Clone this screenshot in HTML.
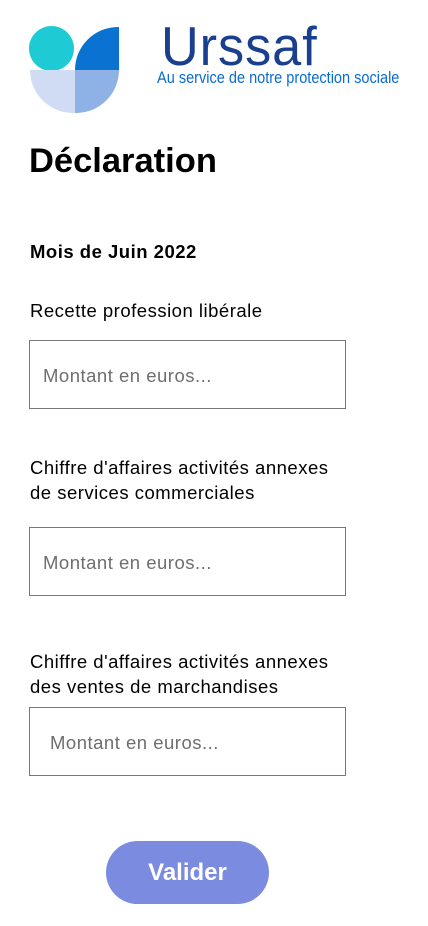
<!DOCTYPE html>
<html><head><meta charset="utf-8"><style>
*{margin:0;padding:0;box-sizing:border-box}
body{width:428px;height:926px;background:#fff;font-family:"Liberation Sans",sans-serif;color:#000;position:relative;overflow:hidden}
.a{position:absolute}
.lbl{position:absolute;left:30px;font-size:18.5px;line-height:25px;letter-spacing:0.5px}
.in{position:absolute;left:29px;width:317px;height:69px;border:1px solid #777;font-size:18.5px;letter-spacing:0.5px;color:#6e6e6e;padding-left:13px;line-height:69px}
</style></head><body>
<div class="a" style="left:29px;top:26px;width:45px;height:45px;border-radius:50%;background:#1ecad3"></div>
<div class="a" style="left:75px;top:27px;width:44px;height:43px;border-top-left-radius:44px;background:#0a72d0"></div>
<div class="a" style="left:30px;top:70px;width:45px;height:43px;border-bottom-left-radius:45px;background:#d0dcf4"></div>
<div class="a" style="left:75px;top:70px;width:44px;height:43px;border-bottom-right-radius:44px;background:#8fb2e6"></div>
<div class="a" style="left:161px;top:16px;font-size:55px;line-height:60px;color:#1b3f8f;letter-spacing:1px;transform:scaleX(0.95);transform-origin:left">Urssaf</div>
<div class="a" style="left:157px;top:68px;font-size:17px;line-height:20px;color:#0a6bd1;white-space:nowrap;transform:scaleX(0.855);transform-origin:left">Au service de notre protection sociale</div>
<div class="a" style="left:29px;top:140px;font-size:34.5px;font-weight:bold;line-height:42px">Déclaration</div>
<div class="a" style="left:30px;top:240px;font-size:18.5px;letter-spacing:0.5px;font-weight:bold;line-height:24px">Mois de Juin 2022</div>
<div class="lbl" style="top:298px">Recette profession libérale</div>
<div class="in" style="top:340px">Montant en euros...</div>
<div class="lbl" style="top:455px">Chiffre d'affaires activités annexes<br>de services commerciales</div>
<div class="in" style="top:527px">Montant en euros...</div>
<div class="lbl" style="top:649px">Chiffre d'affaires activités annexes<br>des ventes de marchandises</div>
<div class="in" style="top:707px;padding-left:20px">Montant en euros...</div>
<div class="a" style="left:106px;top:841px;width:163px;height:63px;border-radius:32px;background:#7b8ce0;color:#fff;font-weight:bold;font-size:24px;text-align:center;line-height:63px">Valider</div>
</body></html>
